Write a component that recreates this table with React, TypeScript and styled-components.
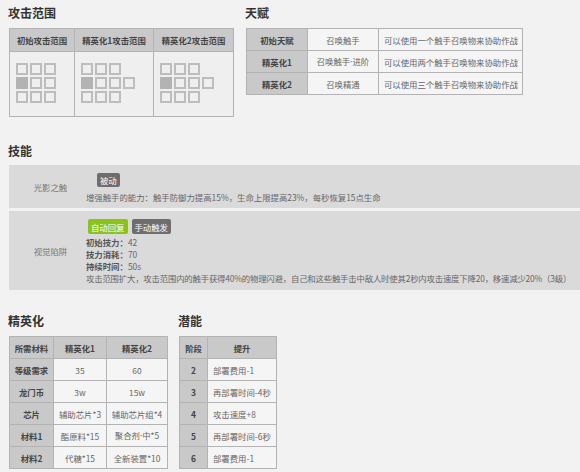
import React from "react";
import styled, { createGlobalStyle } from "styled-components";

const Global = createGlobalStyle`
  html, body { margin: 0; padding: 0; background: #f2f2f2; }
  body { font-family: "Noto Sans CJK SC", "Noto Sans", sans-serif; color: #555; overflow: hidden; }
`;

const Page = styled.div`
  padding: 5px 0 0 9px;
  width: 580px;
  box-sizing: border-box;
`;

const TopRow = styled.div`
  display: flex;
  gap: 12px;
  align-items: flex-start;
`;

const Section = styled.section<{ $mt?: number }>`
  margin-top: ${(p) => p.$mt ?? 0}px;
`;

const Title = styled.h2<{ $mb?: number }>`
  margin: 0 0 ${(p) => p.$mb ?? 7}px -1px;
  font-size: 12px;
  line-height: 16px;
  font-weight: 700;
  color: #333;
`;

const Table = styled.table<{ $w: number }>`
  border-collapse: collapse;
  table-layout: fixed;
  width: ${(p) => p.$w}px;
  font-size: 8.4px;
  border: 1px solid #b3b3b3;
`;

const Row = styled.tr<{ $h?: number }>`
  height: ${(p) => p.$h ?? 22}px;
`;

const Cell = styled.td<{ $head?: boolean; $left?: boolean }>`
  border: 1px solid #b3b3b3;
  padding: 0 0 0 ${(p) => (p.$left ? 5 : 0)}px;
  text-align: ${(p) => (p.$left ? "left" : "center")};
  vertical-align: middle;
  background: ${(p) => (p.$head ? "#c9c9c9" : "#f5f5f5")};
  font-weight: ${(p) => (p.$head ? 700 : 400)};
  color: ${(p) => (p.$head ? "#444" : "#666")};
  white-space: nowrap;
  line-height: 12px;
`;

const Dot = styled.span`
  font-family: "Noto Sans", sans-serif;
`;

const RangeCell = styled.td`
  border: 1px solid #b3b3b3;
  background: #efefef;
  vertical-align: top;
  padding: 11px 0 0 6px;
`;

const Grid = styled.div`
  display: grid;
  grid-template-columns: repeat(4, 12px);
  grid-auto-rows: 12px;
  gap: 2px;
`;

const Square = styled.div<{ $filled?: boolean; $empty?: boolean }>`
  box-sizing: border-box;
  border: 2px solid ${(p) => (p.$empty ? "transparent" : p.$filled ? "#b3b3b3" : "#bdbdbd")};
  background: ${(p) => (p.$filled ? "#b3b3b3" : "transparent")};
`;

const SkillList = styled.div`
  display: flex;
  flex-direction: column;
  gap: 3px;
`;

const SkillRow = styled.div`
  display: grid;
  grid-template-columns: 77px 1fr;
  background: #dadada;
  font-size: 8.4px;
`;

const SkillName = styled.div`
  display: flex;
  align-items: center;
  justify-content: center;
  padding-left: 6px;
  color: #777;
`;

const SkillBody = styled.div<{ $pb: number }>`
  padding: 8px 0 ${(p) => p.$pb}px 0;
  display: flex;
  flex-direction: column;
  min-width: 0;
`;

const TagRow = styled.div<{ $indent?: number; $mb: number; $h: number }>`
  display: flex;
  gap: 4px;
  margin-left: ${(p) => p.$indent ?? 2}px;
  margin-bottom: ${(p) => p.$mb}px;
  height: ${(p) => p.$h}px;
`;

const Tag = styled.span<{ $green?: boolean }>`
  display: inline-flex;
  align-items: center;
  padding: 0 3px;
  border-radius: 2px;
  background: ${(p) => (p.$green ? "#8cc21c" : "#6e6e6e")};
  color: #fff;
  font-size: 8.4px;
`;

const Line = styled.div<{ $tight?: boolean }>`
  line-height: 12px;
  height: 12px;
  color: #666;
  white-space: nowrap;
  letter-spacing: ${(p) => (p.$tight ? "-0.18px" : "normal")};
`;

const StatLabel = styled.b`
  color: #555;
  font-weight: 700;
`;

const BottomRow = styled.div`
  display: flex;
  gap: 11px;
  align-items: flex-start;
  margin-top: 23px;
`;

type Sq = "o" | "x" | "-";
const ranges: Sq[][][] = [
  [
    ["o", "o", "o"],
    ["x", "o", "o"],
    ["o", "o", "o"],
  ],
  [
    ["o", "o", "o", "-"],
    ["x", "o", "o", "o"],
    ["o", "o", "o", "-"],
  ],
  [
    ["o", "o", "o", "-"],
    ["x", "o", "o", "o"],
    ["o", "o", "o", "-"],
  ],
];

const RangeGrid = ({ rows }: { rows: Sq[][] }) => (
  <Grid>
    {rows.flatMap((r, i) =>
      [0, 1, 2, 3].map((j) => {
        const v = r[j] ?? "-";
        return <Square key={`${i}-${j}`} $filled={v === "x"} $empty={v === "-"} />;
      })
    )}
  </Grid>
);

const withDot = (s: string) => {
  const parts = s.split("·");
  if (parts.length === 1) return s;
  return (
    <>
      {parts[0]}
      <Dot>·</Dot>
      {parts[1]}
    </>
  );
};

const talents = [
  ["初始天赋", "召唤触手", "可以使用一个触手召唤物来协助作战"],
  ["精英化1", "召唤触手·进阶", "可以使用两个触手召唤物来协助作战"],
  ["精英化2", "召唤精通", "可以使用三个触手召唤物来协助作战"],
];

const elite = [
  ["等级需求", "35", "60"],
  ["龙门币", "3w", "15w"],
  ["芯片", "辅助芯片*3", "辅助芯片组*4"],
  ["材料1", "酯原料*15", "聚合剂·中*5"],
  ["材料2", "代糖*15", "全新装置*10"],
];

const potentials = [
  ["2", "部署费用-1"],
  ["3", "再部署时间-4秒"],
  ["4", "攻击速度+8"],
  ["5", "再部署时间-6秒"],
  ["6", "部署费用-1"],
];

export default function App() {
  return (
    <>
      <Global />
      <Page>
        <TopRow>
          <Section>
            <Title>攻击范围</Title>
            <Table $w={224}>
              <colgroup>
                <col style={{ width: 65 }} />
                <col style={{ width: 79 }} />
                <col style={{ width: 80 }} />
              </colgroup>
              <tbody>
                <Row $h={23}>
                  <Cell $head>初始攻击范围</Cell>
                  <Cell $head>精英化1攻击范围</Cell>
                  <Cell $head>精英化2攻击范围</Cell>
                </Row>
                <Row $h={65}>
                  {ranges.map((r, i) => (
                    <RangeCell key={i}>
                      <RangeGrid rows={r} />
                    </RangeCell>
                  ))}
                </Row>
              </tbody>
            </Table>
          </Section>
          <Section>
            <Title>天赋</Title>
            <Table $w={276}>
              <colgroup>
                <col style={{ width: 61 }} />
                <col style={{ width: 71 }} />
                <col style={{ width: 144 }} />
              </colgroup>
              <tbody>
                {talents.map((t) => (
                  <Row key={t[0]}>
                    <Cell $head>{t[0]}</Cell>
                    <Cell>{withDot(t[1])}</Cell>
                    <Cell $left>{t[2]}</Cell>
                  </Row>
                ))}
              </tbody>
            </Table>
          </Section>
        </TopRow>

        <Section $mt={26}>
          <Title $mb={6}>技能</Title>
          <SkillList>
            <SkillRow>
              <SkillName>光影之触</SkillName>
              <SkillBody $pb={5}>
                <TagRow $indent={11} $mb={4} $h={14}>
                  <Tag>被动</Tag>
                </TagRow>
                <Line>增强触手的能力：触手防御力提高15%，生命上限提高23%，每秒恢复15点生命</Line>
              </SkillBody>
            </SkillRow>
            <SkillRow>
              <SkillName>视觉陷阱</SkillName>
              <SkillBody $pb={6}>
                <TagRow $mb={2} $h={15}>
                  <Tag $green>自动回复</Tag>
                  <Tag>手动触发</Tag>
                </TagRow>
                <Line>
                  <StatLabel>初始技力：</StatLabel>42
                </Line>
                <Line>
                  <StatLabel>技力消耗：</StatLabel>70
                </Line>
                <Line>
                  <StatLabel>持续时间：</StatLabel>50s
                </Line>
                <Line $tight>
                  攻击范围扩大，攻击范围内的触手获得40%的物理闪避，自己和这些触手击中敌人时使其2秒内攻击速度下降20，移速减少20%（3级）
                </Line>
              </SkillBody>
            </SkillRow>
          </SkillList>
        </Section>

        <BottomRow>
          <Section>
            <Title>精英化</Title>
            <Table $w={158}>
              <colgroup>
                <col style={{ width: 44 }} />
                <col style={{ width: 53 }} />
                <col style={{ width: 61 }} />
              </colgroup>
              <tbody>
                <Row>
                  <Cell $head>所需材料</Cell>
                  <Cell $head>精英化1</Cell>
                  <Cell $head>精英化2</Cell>
                </Row>
                {elite.map((e) => (
                  <Row key={e[0]}>
                    <Cell $head>{e[0]}</Cell>
                    <Cell>{withDot(e[1])}</Cell>
                    <Cell>{withDot(e[2])}</Cell>
                  </Row>
                ))}
              </tbody>
            </Table>
          </Section>
          <Section>
            <Title>潜能</Title>
            <Table $w={97}>
              <colgroup>
                <col style={{ width: 28 }} />
                <col style={{ width: 69 }} />
              </colgroup>
              <tbody>
                <Row>
                  <Cell $head>阶段</Cell>
                  <Cell $head>提升</Cell>
                </Row>
                {potentials.map((p) => (
                  <Row key={p[0]}>
                    <Cell $head>{p[0]}</Cell>
                    <Cell $left>{p[1]}</Cell>
                  </Row>
                ))}
              </tbody>
            </Table>
          </Section>
        </BottomRow>
      </Page>
    </>
  );
}
